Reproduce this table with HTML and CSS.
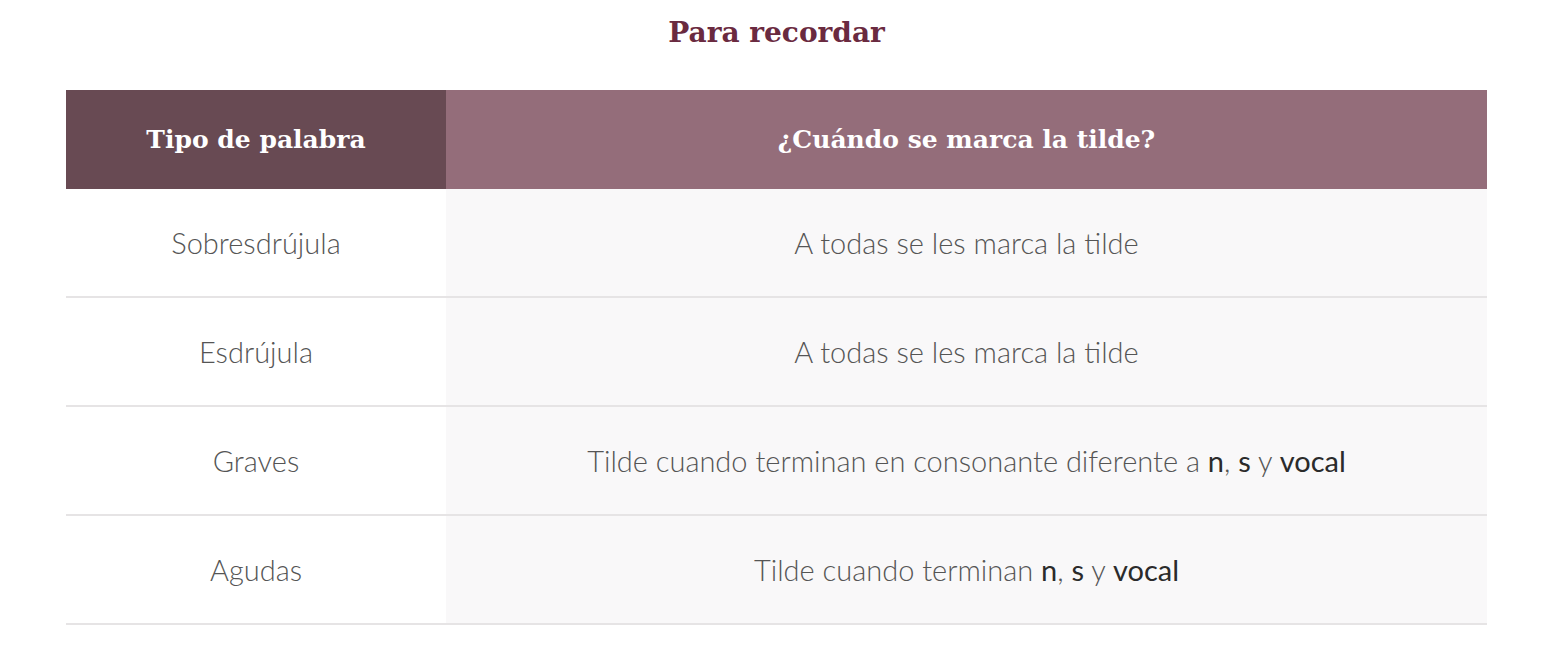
FILE: index.html
```html
<!DOCTYPE html>
<html lang="es">
<head>
<meta charset="utf-8">
<title>Para recordar</title>
<link rel="stylesheet" href="styles.css">
</head>
<body>
<main class="page">
  <h2 class="title">Para recordar</h2>
  <table class="rules">
    <thead>
      <tr>
        <th class="col-type">Tipo de palabra</th>
        <th class="col-rule">¿Cuándo se marca la tilde?</th>
      </tr>
    </thead>
    <tbody>
      <tr>
        <td class="cell-type">Sobresdrújula</td>
        <td class="cell-rule">A todas se les marca la tilde</td>
      </tr>
      <tr>
        <td class="cell-type">Esdrújula</td>
        <td class="cell-rule">A todas se les marca la tilde</td>
      </tr>
      <tr>
        <td class="cell-type">Graves</td>
        <td class="cell-rule">Tilde cuando terminan en consonante diferente a <strong>n</strong>, <strong>s</strong> y <strong>vocal</strong></td>
      </tr>
      <tr>
        <td class="cell-type">Agudas</td>
        <td class="cell-rule">Tilde cuando terminan <strong>n</strong>, <strong>s</strong> y <strong>vocal</strong></td>
      </tr>
    </tbody>
  </table>
</main>
</body>
</html>
```
FILE: styles.css
```css
html, body {
  margin: 0;
  padding: 0;
  background: #ffffff;
}
.page {
  padding: 0 79px 0 66px;
}
.title {
  margin: 0;
  padding-top: 13px;
  height: 90px;
  box-sizing: border-box;
  text-align: center;
  font-family: "DejaVu Serif", "Liberation Serif", serif;
  font-weight: bold;
  font-size: 28px;
  line-height: 40px;
  color: #6a2a40;
}
.rules {
  width: 100%;
  border-collapse: collapse;
  font-family: Lato, "Open Sans", sans-serif;
}
.rules th {
  height: 99px;
  padding: 0;
  color: #ffffff;
  font-family: "DejaVu Serif", "Liberation Serif", serif;
  font-weight: bold;
  font-size: 25px;
  text-align: center;
}
.col-type {
  width: 380px;
  background: #684a53;
}
.col-rule {
  background: #946d7a;
}
.rules td {
  height: 107px;
  padding: 0;
  text-align: center;
  font-size: 29px;
  font-weight: 300;
  color: #555555;
  border-bottom: 2px solid #e6e4e5;
}
.cell-type {
  background: #ffffff;
}
.cell-rule {
  background: #f9f8f9;
}
.rules strong {
  font-weight: 400;
  color: #2b2b2b;
}
```
